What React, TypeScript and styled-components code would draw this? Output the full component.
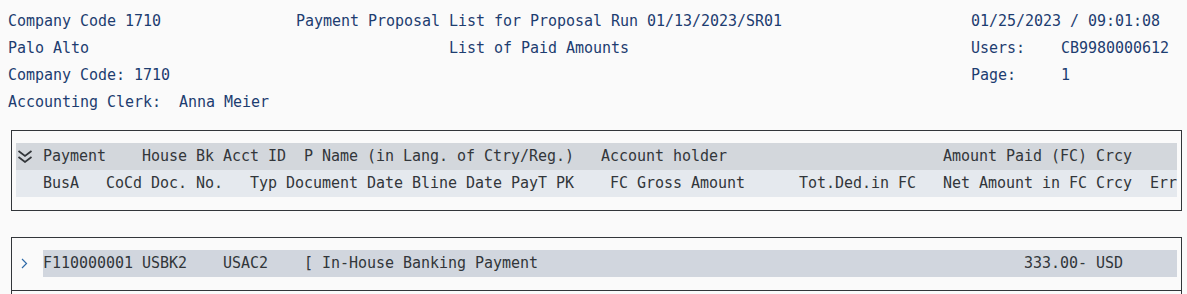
import styled, { createGlobalStyle } from 'styled-components'

// SAP list output: every line is a fixed-width character grid
type Cells = Array<[number, string]>

const toLine = (cells: Cells) =>
    cells.reduce((line, [col, text]) => line.padEnd(col) + text, '')

const topOfPage: Cells[] = [
    [[0, 'Company Code 1710'], [32, 'Payment Proposal List for Proposal Run 01/13/2023/SR01'], [107, '01/25/2023 / 09:01:08']],
    [[0, 'Palo Alto'], [49, 'List of Paid Amounts'], [107, 'Users:'], [117, 'CB9980000612']],
    [[0, 'Company Code: 1710'], [107, 'Page:'], [117, '1']],
    [[0, 'Accounting Clerk:  Anna Meier']],
]

const headingMain: Cells = [
    [0, 'Payment'], [11, 'House Bk Acct ID'], [29, 'P Name (in Lang. of Ctry/Reg.)'],
    [62, 'Account holder'], [100, 'Amount Paid (FC) Crcy'],
]

const headingItems: Cells = [
    [0, 'BusA'], [7, 'CoCd'], [12, 'Doc. No.'], [23, 'Typ'], [27, 'Document Date'],
    [41, 'Bline Date'], [52, 'PayT'], [57, 'PK'], [63, 'FC Gross Amount'],
    [84, 'Tot.Ded.in FC'], [100, 'Net Amount in FC'], [117, 'Crcy'], [123, 'Err'],
]

const payments: Cells[] = [
    [[0, 'F110000001'], [11, 'USBK2'], [20, 'USAC2'], [29, '['], [31, 'In-House Banking Payment'], [109, '333.00-'], [117, 'USD']],
]

const GlobalStyle = createGlobalStyle`
    html, body {
        margin: 0;
        padding: 0;
        background: #fafafa;
        overflow: hidden;
    }
    body {
        font-family: "DejaVu Sans Mono", "Liberation Mono", monospace;
        font-size: 15px;
        letter-spacing: -0.03px;
    }
`

const Page = styled.div`
    width: 100%;
    padding-top: 8px;
    box-sizing: border-box;
`

const TopOfPage = styled.div`
    display: flex;
    flex-direction: column;
    padding-left: 8px;
`

const TextLine = styled.div`
    height: 27px;
    line-height: 27px;
    white-space: pre;
    color: #1d3d70;
`

const Panel = styled.div<{ $gap: number }>`
    margin: ${p => p.$gap}px 5px 0 11px;
    border: 1px solid #32363a;
    border-bottom: none;
`

const Section = styled.div<{ $open?: boolean }>`
    display: flex;
    flex-direction: column;
    padding: 12px 4px 13px;
    border-bottom: 1px solid #32363a;
    min-height: ${p => (p.$open ? 40 : 0)}px;
`

const Row = styled.div<{ $bg?: string }>`
    display: flex;
    align-items: center;
    height: 27px;
    background: ${p => p.$bg ?? 'transparent'};
`

const Toggle = styled.div<{ $inset: number }>`
    width: 27px;
    height: 100%;
    flex: none;
    display: flex;
    align-items: center;
    padding-left: ${p => p.$inset}px;
    box-sizing: border-box;
`

const RowText = styled.div<{ $bg?: string }>`
    flex: 1;
    height: 100%;
    line-height: 27px;
    white-space: pre;
    color: #32363a;
    background: ${p => p.$bg ?? 'transparent'};
`

const ExpandAll = () => (
    <svg width="16" height="13" viewBox="0 0 16 13" fill="none" stroke="#32363a" strokeWidth="1.7">
        <polyline points="1.5,1 8,6 14.5,1" />
        <polyline points="1.5,7 8,12 14.5,7" />
    </svg>
)

const Expand = () => (
    <svg width="7" height="11" viewBox="0 0 7 11" fill="none" stroke="#2f6aa8" strokeWidth="1.2">
        <polyline points="1,1 5.5,5.5 1,10" />
    </svg>
)

const App = () => {
    return (
        <Page>
            <GlobalStyle />
            <TopOfPage>
                { topOfPage.map((cells, i) => (<TextLine key={i}>{ toLine(cells) }</TextLine>)) }
            </TopOfPage>

            <Panel $gap={14}>
                <Section>
                    <Row $bg="#d3d7dc">
                        <Toggle $inset={1}><ExpandAll /></Toggle>
                        <RowText>{ toLine(headingMain) }</RowText>
                    </Row>
                    <Row $bg="#e5e9ee">
                        <Toggle $inset={1} />
                        <RowText>{ toLine(headingItems) }</RowText>
                    </Row>
                </Section>
            </Panel>

            <Panel $gap={26}>
                { payments.map((cells, i) => (
                    <Section key={i}>
                        <Row>
                            <Toggle $inset={5}><Expand /></Toggle>
                            <RowText $bg="#d1d6de">{ toLine(cells) }</RowText>
                        </Row>
                    </Section>
                )) }
                <Section $open />
            </Panel>
        </Page>
    )
}

export default App
